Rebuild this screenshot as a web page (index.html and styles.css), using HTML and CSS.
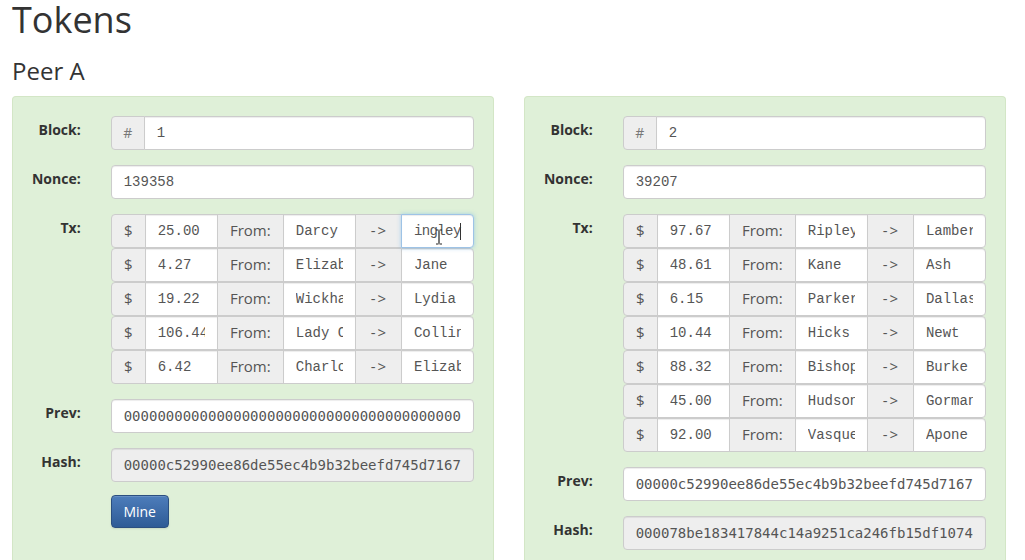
FILE: index.html
```html
<!DOCTYPE html>
<html>
<head>
<meta charset="utf-8">
<link rel="stylesheet" href="styles.css">
</head>
<body>
<h1 class="title">Tokens</h1>
<h3 class="peer">Peer A</h3>
<div class="blocks">
  <div class="card">
    <div class="form">
      <label class="lbl">Block:</label>
      <div class="group">
        <span class="addon hash-addon">#</span>
        <input class="field mono" value="1">
      </div>
      <label class="lbl">Nonce:</label>
      <input class="field mono single" value="139358">
      <label class="lbl">Tx:</label>
      <div class="txs">
        <div class="group tx">
          <span class="addon dollar">$</span><input class="field mono amt" value="25.00"><span class="addon from">From:</span><input class="field mono who" value="Darcy"><span class="addon arrow">-&gt;</span><span class="to-wrap"><input class="field mono focus" value="ingley"><svg class="ibeam" width="8" height="16" viewBox="0 0 8 16"><path d="M1 1h2.5M4.5 1H7M4 1.5v13M1 15h2.5M4.5 15H7" stroke="#222" stroke-width="1.2" fill="none"/></svg><span class="caret"></span></span>
        </div>
        <div class="group tx">
          <span class="addon dollar">$</span><input class="field mono amt" value="4.27"><span class="addon from">From:</span><input class="field mono who" value="Elizabeth"><span class="addon arrow">-&gt;</span><input class="field mono who" value="Jane">
        </div>
        <div class="group tx">
          <span class="addon dollar">$</span><input class="field mono amt" value="19.22"><span class="addon from">From:</span><input class="field mono who" value="Wickham"><span class="addon arrow">-&gt;</span><input class="field mono who" value="Lydia">
        </div>
        <div class="group tx">
          <span class="addon dollar">$</span><input class="field mono amt" value="106.44"><span class="addon from">From:</span><input class="field mono who" value="Lady Catherine"><span class="addon arrow">-&gt;</span><input class="field mono who" value="Collins">
        </div>
        <div class="group tx">
          <span class="addon dollar">$</span><input class="field mono amt" value="6.42"><span class="addon from">From:</span><input class="field mono who" value="Charlotte"><span class="addon arrow">-&gt;</span><input class="field mono who" value="Elizabeth">
        </div>
      </div>
      <label class="lbl">Prev:</label>
      <input class="field hashfont single" value="0000000000000000000000000000000000000000000000000000000000000000">
      <label class="lbl">Hash:</label>
      <input class="field hashfont single ro" readonly value="00000c52990ee86de55ec4b9b32beefd745d71675b6b2e8a1e4c9d0f3a7b8c21">
      <span></span>
      <div><button class="mine">Mine</button></div>
    </div>
  </div>
  <div class="card">
    <div class="form">
      <label class="lbl">Block:</label>
      <div class="group">
        <span class="addon hash-addon">#</span>
        <input class="field mono" value="2">
      </div>
      <label class="lbl">Nonce:</label>
      <input class="field mono single" value="39207">
      <label class="lbl">Tx:</label>
      <div class="txs">
        <div class="group tx">
          <span class="addon dollar">$</span><input class="field mono amt" value="97.67"><span class="addon from">From:</span><input class="field mono who" value="Ripley"><span class="addon arrow">-&gt;</span><input class="field mono who" value="Lambert">
        </div>
        <div class="group tx">
          <span class="addon dollar">$</span><input class="field mono amt" value="48.61"><span class="addon from">From:</span><input class="field mono who" value="Kane"><span class="addon arrow">-&gt;</span><input class="field mono who" value="Ash">
        </div>
        <div class="group tx">
          <span class="addon dollar">$</span><input class="field mono amt" value="6.15"><span class="addon from">From:</span><input class="field mono who" value="Parker"><span class="addon arrow">-&gt;</span><input class="field mono who" value="Dallas">
        </div>
        <div class="group tx">
          <span class="addon dollar">$</span><input class="field mono amt" value="10.44"><span class="addon from">From:</span><input class="field mono who" value="Hicks"><span class="addon arrow">-&gt;</span><input class="field mono who" value="Newt">
        </div>
        <div class="group tx">
          <span class="addon dollar">$</span><input class="field mono amt" value="88.32"><span class="addon from">From:</span><input class="field mono who" value="Bishop"><span class="addon arrow">-&gt;</span><input class="field mono who" value="Burke">
        </div>
        <div class="group tx">
          <span class="addon dollar">$</span><input class="field mono amt" value="45.00"><span class="addon from">From:</span><input class="field mono who" value="Hudson"><span class="addon arrow">-&gt;</span><input class="field mono who" value="Gorman">
        </div>
        <div class="group tx">
          <span class="addon dollar">$</span><input class="field mono amt" value="92.00"><span class="addon from">From:</span><input class="field mono who" value="Vasquez"><span class="addon arrow">-&gt;</span><input class="field mono who" value="Apone">
        </div>
      </div>
      <label class="lbl">Prev:</label>
      <input class="field hashfont single" value="00000c52990ee86de55ec4b9b32beefd745d71675b6b2e8a1e4c9d0f3a7b8c21">
      <label class="lbl">Hash:</label>
      <input class="field hashfont single ro" readonly value="000078be183417844c14a9251ca246fb15df10740c2d9e8b7a6f5e4d3c2b1a09">
      <span></span>
      <div><button class="mine">Mine</button></div>
    </div>
  </div>
</div>
</body>
</html>
```
FILE: styles.css
```css
* { box-sizing: border-box; }
html, body { margin: 0; background: #fff; }
body {
  padding: 0 12px;
  font-family: "Open Sans", "Liberation Sans", sans-serif;
  color: #333;
  font-size: 14px;
  overflow: hidden;
  height: 560px;
}
.title {
  margin: 0;
  font-size: 36px;
  font-weight: 400;
  line-height: 1.1;
  color: #333;
}
.peer {
  margin: 18px 0 12px;
  font-size: 24px;
  font-weight: 400;
  line-height: 1.1;
  color: #333;
}
.blocks {
  display: flex;
  gap: 30px;
  width: 994px;
  height: 464px;
}
.card {
  flex: 0 0 482px;
  width: 482px;
  background: #dff0d8;
  border: 1px solid #d3e6c6;
  border-bottom: 0;
  border-radius: 4px 4px 0 0;
  padding: 19px;
  min-width: 0;
}
.form {
  display: grid;
  grid-template-columns: 48.7px minmax(0, 1fr);
  column-gap: 30px;
  row-gap: 15px;
  align-items: start;
}
.lbl {
  justify-self: end;
  font-weight: 700;
  font-size: 14px;
  line-height: 20px;
  padding-top: 4px;
  color: #333;
  white-space: nowrap;
}
.group {
  display: flex;
  height: 34px;
  min-width: 0;
}
.field {
  height: 34px;
  border: 1px solid #ccc;
  border-radius: 4px;
  padding: 6px 12px;
  font-size: 14px;
  color: #555;
  background: #fff;
  box-shadow: inset 0 1px 1px rgba(0,0,0,.075);
  outline: none;
  min-width: 0;
  width: 100%;
}
.mono { font-family: "Liberation Mono", "Courier New", monospace; }
.hashfont { font-family: "DejaVu Sans Mono", monospace; font-size: 14px; color: #555; }
.ro { background: #eee; }
.addon {
  display: flex;
  align-items: center;
  justify-content: center;
  height: 34px;
  padding-bottom: 1px;
  border: 1px solid #ccc;
  background: #eee;
  color: #555;
  font-size: 15px;
  flex: none;
}
.group > .addon:first-child { border-radius: 4px 0 0 4px; }
.group > * + * { margin-left: -1px; }
.group .field { border-radius: 0; flex: 1 1 0; width: 0; }
.group > .field:last-child { border-radius: 0 4px 4px 0; }
.hash-addon { width: 34px; color: #777; font-size: 14px; }
.dollar { width: 35px; }
.from { width: 67px; }
.arrow { width: 47px; letter-spacing: 2px; padding-left: 2px; }
.txs { display: flex; flex-direction: column; min-width: 0; }
.to-wrap {
  position: relative;
  flex: 1 1 26px;
  width: 26px;
  display: flex;
  min-width: 0;
}
.to-wrap .field {
  width: 100%;
  flex: 1 1 auto;
  border-radius: 0 4px 4px 0;
}
.focus {
  border-color: #9ec3e6 !important;
  box-shadow: inset 0 1px 1px rgba(0,0,0,.075), 0 0 4px rgba(102,175,233,.5);
  position: relative;
  z-index: 1;
  padding: 6px 6px 6px 12px;
  letter-spacing: -0.6px;
}
.ibeam {
  position: absolute;
  left: 34px;
  top: 15px;
  z-index: 2;
}
.caret {
  position: absolute;
  left: 59px;
  top: 9px;
  width: 1px;
  height: 17px;
  background: #333;
  z-index: 2;
}
.mine {
  width: 58px;
  height: 33px;
  margin-top: -2px;
  border: 1px solid #2b4f80;
  border-radius: 4px;
  background: linear-gradient(#4d7dbb, #2e5b96);
  color: #fff;
  font-family: "Open Sans", "Liberation Sans", sans-serif;
  font-size: 14px;
  padding: 0;
  box-shadow: inset 0 1px 0 rgba(255,255,255,.15), 0 1px 2px rgba(0,0,0,.1);
}
```
